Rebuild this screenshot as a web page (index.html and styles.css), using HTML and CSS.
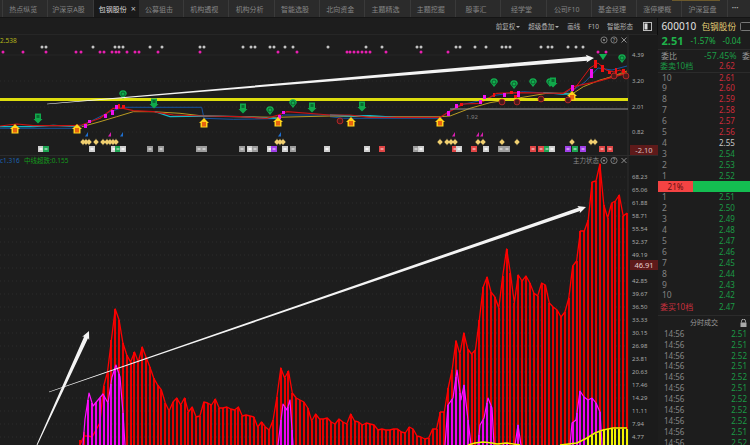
FILE: index.html
```html
<!DOCTYPE html>
<html lang="zh">
<head>
<meta charset="utf-8">
<title>包钢股份</title>
<link rel="stylesheet" href="styles.css">
</head>
<body>
<div class="app">
  <nav class="tabs">
    <span class="tab-lead"></span>
    <a class="tab">热点纵览</a>
    <a class="tab">沪深京A股</a>
    <a class="tab active">包钢股份<i class="close">×</i></a>
    <a class="tab">公募狙击</a>
    <a class="tab">机构透视</a>
    <a class="tab">机构分析</a>
    <a class="tab">智能选股</a>
    <a class="tab">北向资金</a>
    <a class="tab">主题精选</a>
    <a class="tab">主题挖掘</a>
    <a class="tab">股事汇</a>
    <a class="tab">经学堂</a>
    <a class="tab">公司F10</a>
    <a class="tab">基金经理</a>
    <a class="tab">涨停梗概</a>
    <a class="tab">沪深复盘</a>
    <span class="more">•••</span>
    <span class="gold"></span>
  </nav>
  <div class="main">
    <section class="charts">
      <div class="toolbar">
        <span>前复权<i class="caret"></i></span>
        <span>超级叠加<i class="caret"></i></span>
        <span>画线</span>
        <span>F10</span>
        <span>智能形态</span>
        <svg class="tool-icon" width="9" height="9" viewBox="0 0 9 9"><rect x=".5" y=".5" width="8" height="8" fill="none" stroke="#bbb"/><rect x="1.5" y="1.5" width="3" height="6" fill="#ddd"/></svg>
      </div>
      <svg id="chart" class="chart" width="658" height="410" viewBox="0 35 658 410"></svg>
    </section>
    <aside class="side">
      <div class="quote-head"><b class="code">600010</b><span class="name">包钢股份</span><svg class="head-icon" width="14" height="9" viewBox="0 0 14 9"><rect x=".5" y=".5" width="13" height="8" rx="1" fill="none" stroke="#777"/></svg></div>
      <div class="quote-price"><b class="last">2.51</b><span>-1.57%</span><span>-0.04</span></div>
      <div class="ratio"><span class="ratio-l">委比</span><span class="ratio-v">-57.45%</span><span class="ratio-r">委</span></div>
      <div class="row book-title"><span class="t-green">委卖10档</span><span class="p red">2.62</span></div>
      <div class="book">
        <div class="row"><span class="n">10</span><span class="p red">2.61</span></div>
        <div class="row"><span class="n">9</span><span class="p red">2.60</span></div>
        <div class="row"><span class="n">8</span><span class="p red">2.59</span></div>
        <div class="row"><span class="n">7</span><span class="p red">2.58</span></div>
        <div class="row"><span class="n">6</span><span class="p red">2.57</span></div>
        <div class="row"><span class="n">5</span><span class="p red">2.56</span></div>
        <div class="row"><span class="n">4</span><span class="p white">2.55</span></div>
        <div class="row"><span class="n">3</span><span class="p green">2.54</span></div>
        <div class="row"><span class="n">2</span><span class="p green">2.53</span></div>
        <div class="row"><span class="n">1</span><span class="p green">2.52</span></div>
      </div>
      <div class="meter"><span class="meter-red">21%</span><span class="meter-green"></span></div>
      <div class="book buy">
        <div class="row"><span class="n">1</span><span class="p green">2.51</span></div>
        <div class="row"><span class="n">2</span><span class="p green">2.50</span></div>
        <div class="row"><span class="n">3</span><span class="p green">2.49</span></div>
        <div class="row"><span class="n">4</span><span class="p green">2.48</span></div>
        <div class="row"><span class="n">5</span><span class="p green">2.47</span></div>
        <div class="row"><span class="n">6</span><span class="p green">2.46</span></div>
        <div class="row"><span class="n">7</span><span class="p green">2.45</span></div>
        <div class="row"><span class="n">8</span><span class="p green">2.44</span></div>
        <div class="row"><span class="n">9</span><span class="p green">2.43</span></div>
        <div class="row"><span class="n">10</span><span class="p green">2.42</span></div>
      </div>
      <div class="row book-foot"><span class="t-red">委买10档</span><span class="p green">2.47</span></div>
      <div class="ticks-head"><span>分时成交</span><svg class="lock" width="7" height="8" viewBox="0 0 7 8"><path d="M1.5 3.5V2.2a2 2 0 0 1 4 0v1.3" fill="none" stroke="#aaa"/><rect x=".5" y="3.5" width="6" height="4.5" fill="#aaa"/></svg></div>
      <div class="ticks">
        <div class="tick"><span>14:56</span><span class="green">2.51</span></div>
        <div class="tick"><span>14:56</span><span class="green">2.51</span></div>
        <div class="tick"><span>14:56</span><span class="green">2.52</span></div>
        <div class="tick"><span>14:56</span><span class="green">2.51</span></div>
        <div class="tick"><span>14:56</span><span class="green">2.52</span></div>
        <div class="tick"><span>14:56</span><span class="green">2.51</span></div>
        <div class="tick"><span>14:56</span><span class="green">2.52</span></div>
        <div class="tick"><span>14:56</span><span class="green">2.52</span></div>
        <div class="tick"><span>14:56</span><span class="green">2.52</span></div>
        <div class="tick"><span>14:56</span><span class="green">2.51</span></div>
        <div class="tick"><span>14:56</span><span class="green">2.52</span></div>
      </div>
    </aside>
  </div>
</div>
<script src="chart.js"></script>
</body>
</html>
```
FILE: styles.css
```css
* { box-sizing: border-box; }
html, body { margin: 0; padding: 0; background: #1d1d1d; }
body { width: 750px; height: 445px; overflow: hidden; font-family: "Noto Sans", "Noto Sans CJK SC", sans-serif; color: #aaa; }
.app { display: flex; flex-direction: column; width: 750px; height: 445px; }

.tabs { position: relative; display: flex; flex: none; height: 18px; background: #2b2b2b; border-bottom: 1px solid #151515; font-size: 7px; white-space: nowrap; }
.tab-lead { flex: none; width: 3px; border-right: 1px solid #3a3a3a; }
.tab { flex: none; display: flex; align-items: center; justify-content: center; position: relative; width: 45.3px; height: 17px; padding-right: 4px; color: #858585; border-right: 1px solid #3a3a3a; }
.tab.active { background: #1a1a1a; color: #d8d8d8; border-right-color: #1a1a1a; padding-right: 6px; }
.close { position: absolute; right: 2px; top: 3px; font-style: normal; font-size: 9px; line-height: 11px; color: #bbb; }
.more { flex: none; padding-left: 4px; line-height: 17px; font-size: 6px; color: #aaa; letter-spacing: 0; }
.gold { position: absolute; left: 672px; top: 0; width: 48px; height: 1px; background: #6d5a2c; }

.main { flex: 1; display: flex; min-height: 0; }
.charts { flex: none; width: 658px; display: flex; flex-direction: column; border-right: 1px solid #0e0e0e; }
.toolbar { flex: none; height: 17px; display: flex; align-items: center; justify-content: flex-end; gap: 8px; padding-right: 5px; font-size: 6.5px; color: #b5b5b5; border-bottom: 1px solid #262626; }
.caret { display: inline-block; margin-left: 1px; border: 2px solid transparent; border-top: 2.5px solid #b5b5b5; border-bottom: 0; vertical-align: 1px; }
.tool-icon { margin-left: 2px; }
.chart { display: block; flex: none; }
.chart text { font-family: "Noto Sans", "Noto Sans CJK SC", sans-serif; }

.side { flex: none; width: 92px; display: flex; flex-direction: column; font-size: 8px; overflow: hidden; }
.quote-head { flex: none; height: 16px; display: flex; align-items: center; padding-left: 3.5px; gap: 5px; }
.code { font-size: 10px; font-weight: 400; color: #e2e2e2; letter-spacing: .1px; }
.name { font-size: 8.7px; color: #e6cf76; white-space: nowrap; }
.head-icon { flex: none; margin-left: -1px; }
.quote-price { flex: none; height: 16px; display: flex; align-items: center; gap: 7px; padding: 0 0 3px 3.5px; color: #1fb24a; font-size: 8px; border-bottom: 1px solid #2b2b2b; }
.last { font-size: 11px; font-weight: 700; }
.ratio { flex: none; height: 11px; display: flex; align-items: center; padding-left: 3px; white-space: nowrap; line-height: 10px; }
.ratio-l { width: 45px; color: #9a9a9a; }
.ratio-v { width: 40px; color: #1b9a45; font-size: 8.8px; }
.ratio-r { color: #9a9a9a; }
.row { height: 10.9px; display: flex; align-items: center; padding-left: 3px; font-size: 8px; line-height: 10.9px; }
.book-title { flex: none; height: 11.5px; padding-left: 2px; border-bottom: 1px solid #2b2b2b; }
.book-title .t-green { width: 59px; color: #1b9a45; font-size: 8px; }
.book-foot { flex: none; height: 11px; margin-top: 1px; padding-left: 2px; }
.book-foot .t-red { width: 59px; color: #c9303e; font-size: 8px; }
.book { flex: none; }
.n { width: 58px; padding-left: 1px; color: #828282; font-size: 8.5px; }
.p { font-size: 8px; }
.red { color: #cb2b3a; }
.green { color: #1b9a45; }
.white { color: #c8c8c8; }
.meter { flex: none; height: 11px; display: flex; }
.meter-red { width: 35px; background: #f44343; color: #5c1010; font-size: 8px; line-height: 11px; text-align: center; }
.meter-green { flex: 1; background: #14bd51; }
.ticks-head { position: relative; flex: none; height: 14px; margin-top: 1.5px; display: flex; align-items: center; justify-content: center; border-top: 1px solid #2b2b2b; color: #999; font-size: 7px; }
.lock { position: absolute; right: 3px; top: 3px; }
.ticks { flex: none; }
.tick { height: 10.9px; display: flex; justify-content: space-between; align-items: center; padding: 0 3px 0 6px; font-size: 8px; line-height: 10.9px; color: #858585; }
```
FILE: chart.js
```js
(function () {
  var svg = document.getElementById('chart');
  var NS = 'http://www.w3.org/2000/svg';
  function el(name, attrs, text) {
    var e = document.createElementNS(NS, name);
    for (var k in attrs) e.setAttribute(k, attrs[k]);
    if (text !== undefined) e.textContent = text;
    svg.appendChild(e);
    return e;
  }
  function pts(a) { return a.map(function (p) { return p[0].toFixed(1) + ',' + p[1].toFixed(1); }).join(' '); }
  function line(a, color, w) { el('polyline', { points: pts(a), fill: 'none', stroke: color, 'stroke-width': w || 1, 'stroke-linejoin': 'round' }); }
  function txt(x, y, s, color, size, anchor) { el('text', { x: x, y: y, fill: color, 'font-size': size, 'text-anchor': anchor || 'start' }, s); }
  function z3(list) { return list.map(function (p) { return [p[0] / 3, 80 + p[1] / 3]; }); }
  function z4(list) { return list.map(function (p) { return [330 + p[0] / 3, 80 + p[1] / 3]; }); }

  /* panel background + grid */
  el('rect', { x: 628, y: 35, width: 30, height: 410, fill: '#1b1b1b' });
  el('line', { x1: 628, y1: 35, x2: 628, y2: 445, stroke: '#2e2e2e' });
  el('line', { x1: 0, y1: 55, x2: 628, y2: 55, stroke: '#262626' });
  el('line', { x1: 0, y1: 155.5, x2: 658, y2: 155.5, stroke: '#2c2c2c' });
  [81, 107, 132].forEach(function (y) { el('line', { x1: 0, y1: y, x2: 628, y2: y, stroke: '#2a2a2a', 'stroke-dasharray': '1 3' }); });
  for (var gy = 177; gy < 445; gy += 13) el('line', { x1: 0, y1: gy, x2: 628, y2: gy, stroke: '#2d2d2d', 'stroke-dasharray': '1 3' });

  /* dot rows */
  [42,46,93,115,119,123,150,162,200,204,243,251,255,270,274,285,293,328,366,382,417,421,456,460,475,486,502,506,510,541,548,552,568,576,583].forEach(function (x) {
    el('circle', { cx: x, cy: 47, r: 1.5, fill: '#c4c4c4' });
  });
  [3,23,46,76,81,100,104,112,116,119,127,135,139,158,200,278,297,347,350,354,358,362,366,370,386,421,448,598,606].forEach(function (x) {
    el('circle', { cx: x, cy: 52, r: 1.5, fill: '#e81fb0' });
  });
  txt(0, 43, '2.538', '#b5b51a', 6.5);

  /* upper chart lines */
  line(z3([[0,145],[225,145],[260,130],[330,95],[370,82],[605,82],[612,115],[700,118],[830,116],[850,105],[990,105]]), '#16539f', 1);
  line(z4([[0,110],[40,115],[330,115],[355,95],[390,75],[450,62],[500,45],[580,35],[700,42],[720,30]]), '#16539f', 1);
  line([[570,92],[585,82],[598,68],[612,70],[627,66]], '#16539f', 1);
  line(z3([[245,140],[300,125],[350,110],[400,95],[460,95],[540,100],[610,108],[720,110],[830,112],[990,108]]), '#b89a22', 1);
  line(z4([[0,108],[120,110],[330,110],[360,108],[420,85],[480,68],[560,55],[650,40],[730,40],[760,20],[810,0],[890,-22]]), '#b89a22', 1);
  line([[602,80],[627,71]], '#c96a1e', 1);
  line(z3([[0,140],[100,140],[160,136],[230,140]]), '#12b8c8', 1.3);
  line(z3([[465,95],[510,110],[610,108],[720,110],[830,115]]), '#12b8c8', 1.3);
  line(z4([[0,105],[60,108],[120,107],[200,112],[320,112]]), '#12b8c8', 1.3);
  line(z4([[640,38],[700,42],[720,42]]), '#12b8c8', 1.3);
  line(z3([[0,138],[50,132],[100,137],[220,137],[245,135],[300,115],[340,85],[370,85],[400,92],[460,95],[520,105],[610,108],[720,110],[800,115],[835,105],[860,95],[990,105]]), '#c81414', 1.2);
  line(z4([[0,105],[60,105],[120,112],[330,112],[350,100],[400,72],[450,70],[500,40],[560,38],[700,40],[730,20],[800,5],[890,-20]]), '#c81414', 1.2);
  line([[572,92],[590,68],[598,63],[606,70],[614,72],[620,70],[627,75]], '#d81414', 1);

  /* yellow + grey levels */
  el('rect', { x: 0, y: 98, width: 628, height: 3, fill: '#dede0e' });
  el('rect', { x: 450, y: 108.5, width: 178, height: 1, fill: '#9a9a9a' });
  txt(466, 118.5, '1.92', '#7f7f7f', 6);

  /* candles */
  [[84,124,3,4],[88,120,3,3],[104,114,3,4],[111,110,3,5],[115,105,3,4],[278,115,3,4],[282,111,3,3],[447,111,3,5],[455,104,3,4],[479,100,3,4],[483,95,3,4],[503,93,3,4],[517,91,3,6],[571,85,3,6],[590,69,3,9]].forEach(function (r) {
    el('rect', { x: r[0], y: r[1], width: r[2], height: r[3], fill: '#f010f0' });
  });
  [[118,104,2,4],[122,105,3,3],[460,103,3,3],[493,93,2,4],[510,91,3,3],[514,95,3,3],[594,60,3,8],[601,65,3,7],[608,71,3,3],[615,68,2,6],[622,69,3,4]].forEach(function (r) {
    el('rect', { x: r[0], y: r[1], width: r[2], height: r[3], fill: '#f01010' });
  });

  /* markers */
  function house(x, y) {
    el('polygon', { points: [x - 5, y, x, y - 5, x + 5, y, x + 3.5, y, x + 3.5, y + 4.5, x - 3.5, y + 4.5, x - 3.5, y].join(' '), fill: '#ffd21a' });
    el('rect', { x: x - 2, y: y - 1, width: 4, height: 4.5, fill: '#e8640f' });
  }
  [[15,129],[77,129],[204,123],[278,122],[351,122],[440,122],[572,96]].forEach(function (m) { house(m[0], m[1]); });
  function pin(x, y) {
    el('path', { d: 'M' + (x - 3.8) + ' ' + y + 'a3.8 3.8 0 1 1 7.6 0l-3.8 5z', fill: '#12ad4e' });
    el('circle', { cx: x, cy: y, r: 2, fill: 'none', stroke: '#0a5028', 'stroke-width': .8 });
  }
  [[123,94],[270,110],[293,103],[494,82],[514,84],[533,82],[550,82],[622,58]].forEach(function (m) { pin(m[0], m[1]); });
  function down(x, y) {
    el('polygon', { points: [x - 3, y - 5.5, x + 3, y - 5.5, x + 3, y, x + 4.5, y, x, y + 4.5, x - 4.5, y, x - 3, y].join(' '), fill: '#10a84a' });
    el('rect', { x: x - 1.5, y: y - 4, width: 3, height: 3, fill: '#0a6a30' });
  }
  [[38,119],[154,104],[243,109],[312,108],[362,107],[553,83]].forEach(function (m) { down(m[0], m[1]); });
  el('polygon', { points: '599,54 607,54 603,60', fill: '#10b050' });
  [[340,121],[502,102],[517,102],[541,99],[568,100],[614,76],[626,76]].forEach(function (m) {
    el('circle', { cx: m[0], cy: m[1], r: 2.9, fill: '#4a1a1a', stroke: '#c02828', 'stroke-width': .9 });
  });

  /* flags */
  [[87,'#1f6fd0'],[122,'#1f6fd0'],[110,'#d81fb0'],[280,'#1f6fd0'],[454,'#d81fb0'],[478,'#d81fb0'],[482,'#d81fb0']].forEach(function (f) {
    el('polygon', { points: (f[0] - 2) + ',136.5 ' + (f[0] + 1) + ',132 ' + (f[0] + 1) + ',136.5', fill: f[1] });
  });
  /* stars */
  [83,86,89,96,103,107,110,113,116,277,280,283,440,447,451,455,478,483,502,517,572,591,595].forEach(function (x) {
    el('polygon', { points: [x - 3, 142, x - 1, 140.8, x, 138.6, x + 1, 140.8, x + 3, 142, x + 1, 143.2, x, 145.4, x - 1, 143.2].join(' '), fill: '#f0cf70' });
    el('circle', { cx: x, cy: 142, r: 2.1, fill: '#f0cf70' });
  });
  /* tag chips */
  var W = '#cfcfcf', G = '#9c9c9c', R = '#e04646', N = '#1fa554', P = '#a040e8';
  [[41,W],[46,N],[92,W],[114,W],[118,N],[123,W],[150,G],[161,G],[199,G],[204,G],[242,G],[250,W],[255,G],[270,W],[274,P],[285,W],[293,G],[327,W],[367,W],[382,R],[416,G],[421,W],[455,R],[459,W],[474,R],[486,W],[501,G],[507,G],[533,R],[541,R],[547,N],[552,W],[568,P],[575,N],[583,P],[602,R],[610,R]].forEach(function (c) {
    el('rect', { x: c[0] - 3, y: 146, width: 6, height: 6, fill: c[1] });
    el('rect', { x: c[0] - 1.5, y: 148, width: 3, height: 2, fill: c[1] === W ? '#f3f3f3' : 'rgba(255,255,255,.45)' });
  });

  /* lower chart labels */
  txt(0, 163, 'c1.316', '#1c62b0', 6.5);
  txt(24, 163, '中线超跌:0.155', '#139a1c', 6.5);
  txt(573, 163, '主力状态', '#8a8a8a', 6.5);
  function miniIcons(x, y) {
    el('circle', { cx: x, cy: y, r: 3.1, fill: 'none', stroke: '#a0a0a0', 'stroke-width': .7 });
    el('circle', { cx: x, cy: y, r: .9, fill: '#a0a0a0' });
    el('circle', { cx: x + 10, cy: y, r: 3.1, fill: 'none', stroke: '#a0a0a0', 'stroke-width': .7 });
    txt(x + 10, y + 1.9, '?', '#a0a0a0', 5.5, 'middle');
    el('path', { d: 'M' + (x + 17.5) + ' ' + (y - 2.5) + 'l5 5m0 -5l-5 5', stroke: '#a8a8a8', 'stroke-width': .8, fill: 'none' });
  }
  miniIcons(604, 160.5);
  miniIcons(604, 40);

  /* main histogram */
  function seg(ys, a, b) { var s = (b - a) / (ys.length); return ys.map(function (y, i) { return [a + i * s, y]; }); }
  var top = seg([436,437,430,423,386,372,340,309,320,343,355,362,352,362,347,357,367,378,385,390,403,411,402,398,405,398,412,407,417,416,402,403,405,399,408,408,407,409,410,407,416,415,416,417,427,422,427,430,420,397,368,378,371,393,398], 88.3, 300)
    .concat(seg([400,402,408,421,414,419,419,418,422,424,419,422,424,414,421,422,425,423,424,425,430,429,430,430,429,429,432,433,427,429,436,437,439,438,429,429,412,412,388,370], 300, 456))
    .concat(seg([340.7,354,333,349,354,350,320,287,277,292,297,308,276,249,273,303,275,281,276,283,293,296,283,285,303,307,310,317,312,298,266,261,231,231,220,182,181,164,205,218,203,201,195,216,213], 456, 631));
  var d = '';
  var xs = [];
  top.forEach(function (p) { var x = Math.round(p[0]); d += 'M' + x + ' ' + p[1] + 'V445'; xs.push(x); });
  el('path', { d: 'M80 445V440M84 445V432' + d, stroke: '#e80000', 'stroke-width': 2, fill: 'none', 'shape-rendering': 'crispEdges' });
  line([[80,445],[84,436]].concat(top), '#ff0000', 1.3);

  /* magenta hills */
  [
    [[83,445],[85,419],[89,393],[93,406],[98,400],[103,394],[108,403],[112,377],[116,365],[120,377],[123,413],[125,445]],
    [[278,445],[283,404],[287,410],[290,400],[293,445]],
    [[445,445],[448,405],[453,398],[457,370],[461,400],[464,385],[468,420],[471,445]],
    [[478,445],[480,425],[484,418],[488,398],[492,408],[494,445]],
    [[503,445],[505,443],[508,445]],
    [[515,445],[518,425],[521,445]],
    [[570,445],[572,423],[576,420],[580,391],[584,397],[588,400],[592,398],[596,403],[600,412],[602,445]]
  ].forEach(function (h) {
    var a = h[0][0], b = h[h.length - 1][0], path = '';
    function yAt(x) {
      for (var i = 1; i < h.length; i++) if (x <= h[i][0]) {
        return h[i - 1][1] + (h[i][1] - h[i - 1][1]) * (x - h[i - 1][0]) / (h[i][0] - h[i - 1][0]);
      }
      return 445;
    }
    xs.forEach(function (x) { if (x > a && x < b) path += 'M' + x + ' ' + yAt(x).toFixed(1) + 'V445'; });
    el('path', { d: path, stroke: '#f000f0', 'stroke-width': 2, fill: 'none', 'shape-rendering': 'crispEdges' });
    line(h, '#ff14ff', 1.2);
  });

  /* yellow hills */
  var yb = '';
  xs.forEach(function (x) {
    if (x >= 603) yb += 'M' + x + ' 429V445';
    else if (x >= 587) yb += 'M' + x + ' ' + (438 - (x - 587) * .5) + 'V445';
  });
  el('path', { d: yb, stroke: '#f2f200', 'stroke-width': 2, fill: 'none', 'shape-rendering': 'crispEdges' });
  line([[468,445],[475,443],[483,442],[492,443],[497,444],[507,443],[520,445]], '#f2f200', 1.4);
  line([[560,445],[577,443],[587,438],[595,433],[603,430],[613,428],[627,428]], '#f2f200', 1.6);

  /* tapered hand-drawn arrows */
  function arrow(x1, y1, x2, y2, w0, w1, head) {
    var dx = x2 - x1, dy = y2 - y1, l = Math.sqrt(dx * dx + dy * dy), ux = dx / l, uy = dy / l, nx = -uy, ny = ux;
    var bx = x2 - ux * head, by = y2 - uy * head;
    var p = [
      [x1 + nx * w0 / 2, y1 + ny * w0 / 2],
      [bx + nx * w1 / 2, by + ny * w1 / 2],
      [bx - ux * 1 + nx * head * .55, by - uy * 1 + ny * head * .55],
      [x2, y2],
      [bx - ux * 1 - nx * head * .55, by - uy * 1 - ny * head * .55],
      [bx - nx * w1 / 2, by - ny * w1 / 2],
      [x1 - nx * w0 / 2, y1 - ny * w0 / 2]
    ];
    el('polygon', { points: pts(p), fill: '#f4f4f4' });
  }
  arrow(47, 104, 594, 58, .7, 4.2, 7);
  arrow(49, 392, 586, 207, .7, 3.6, 7);
  arrow(37, 445, 89, 331, .8, 4.2, 7);

  /* axis labels */
  [['4.39',55],['3.20',81],['2.01',107],['0.82',132]].forEach(function (a) { txt(632, a[1] + 2, a[0], '#a8a8a8', 6); });
  ['68.23','65.06','61.88','58.71','55.54','52.37','49.19','','42.85','39.67','36.50','33.33','30.15','26.98','23.81','20.63','17.46','14.29','11.11','7.94','4.77'].forEach(function (s, i) {
    if (s) txt(632, 177 + i * 13 + 2, s, '#a8a8a8', 6);
  });
  el('rect', { x: 630, y: 145, width: 28, height: 10, fill: '#5e1a1a' });
  txt(644, 152.8, '-2.10', '#d8c0c0', 7.5, 'middle');
  el('rect', { x: 630, y: 260, width: 28, height: 10, fill: '#5e1a1a' });
  txt(644, 267.8, '46.91', '#e6d0d0', 7.5, 'middle');
})();
```
